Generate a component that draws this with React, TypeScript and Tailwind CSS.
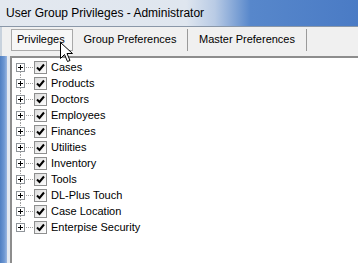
import React from 'react';

const items = [
  'Cases',
  'Products',
  'Doctors',
  'Employees',
  'Finances',
  'Utilities',
  'Inventory',
  'Tools',
  'DL-Plus Touch',
  'Case Location',
  'Enterpise Security',
];

function PlusBox() {
  return (
    <div className="relative w-[9px] h-[9px] border border-[#8f9499] bg-white shrink-0">
      <div className="absolute left-[1px] top-[3px] w-[5px] h-[1px] bg-black"></div>
      <div className="absolute left-[3px] top-[1px] w-[1px] h-[5px] bg-black"></div>
    </div>
  );
}

function CheckBox() {
  return (
    <div className="w-[13px] h-[13px] border border-[#8e8f8f] bg-gradient-to-br from-[#dcdcdc] to-white flex items-center justify-center shrink-0">
      <svg width="9" height="9" viewBox="0 0 9 9">
        <path d="M1 4.5 L3.5 7 L8 1.5" fill="none" stroke="#000" strokeWidth="2" />
      </svg>
    </div>
  );
}

function Cursor() {
  return (
    <svg className="absolute left-[60px] top-[42px]" width="14" height="22" viewBox="0 0 14 22">
      <path
        d="M0.5 0.5 L0.5 16.5 L4.5 12.5 L7.5 19.5 L10 18.5 L7 11.5 L12.5 11.5 Z"
        fill="#fff"
        stroke="#000"
        strokeWidth="1"
      />
    </svg>
  );
}

export default function App() {
  return (
    <div className="relative w-[358px] h-[263px] overflow-hidden bg-white font-['Liberation_Sans',Arial,sans-serif] text-black">
      <div className="h-[27px] flex items-center pl-[6px] text-[12px] border-b border-[#8a97a8] bg-[linear-gradient(to_right,#e3e8ef_0%,#dfe6ef_52%,#b9cbe5_60%,#5787cb_70%,#4a7bc5_100%)]">
        User Group Privileges - Administrator
      </div>

      <div className="h-[29px] bg-[#f0f0f0] flex items-start pl-[9px] pt-[2px] text-[11px] border-l-2 border-[#c8d2dd]">
        <div className="h-[22px] w-[62px] border border-[#a9a9a9] bg-[#f7f7f7] flex items-center pl-[5px] pb-[1px]">
          Privileges
        </div>
        <div className="h-[22px] w-[115px] flex items-center justify-center border-r border-[#9a9a9a] pb-[1px]">
          Group Preferences
        </div>
        <div className="h-[22px] w-[119px] flex items-center justify-center border-r border-[#9a9a9a] pb-[1px]">
          Master Preferences
        </div>
      </div>

      <div className="flex h-[207px]">
        <div className="w-[7px] bg-[linear-gradient(to_right,#4f7fc2,#6d97d2_60%,#9ab6e0)]"></div>
        <div className="w-[3px] bg-[#e4e9f0]"></div>
        <div className="flex-1 border-l-2 border-t-2 border-[#8d8d8d] bg-white pt-[1px] text-[11px]">
          {items.map((item, i) => (
            <div key={item} className="relative flex items-center h-[16px] pl-[4px]">
              {i > 0 && (
                <div className="absolute left-[8px] top-0 h-[3px] border-l border-dotted border-[#a0a0a0]"></div>
              )}
              {i < items.length - 1 && (
                <div className="absolute left-[8px] bottom-0 h-[4px] border-l border-dotted border-[#a0a0a0]"></div>
              )}
              <PlusBox />
              <div className="w-[7px] border-t border-dotted border-[#a0a0a0] mx-[1px]"></div>
              <CheckBox />
              <span className="ml-[4px]">{item}</span>
            </div>
          ))}
        </div>
      </div>

      <Cursor />
    </div>
  );
}
